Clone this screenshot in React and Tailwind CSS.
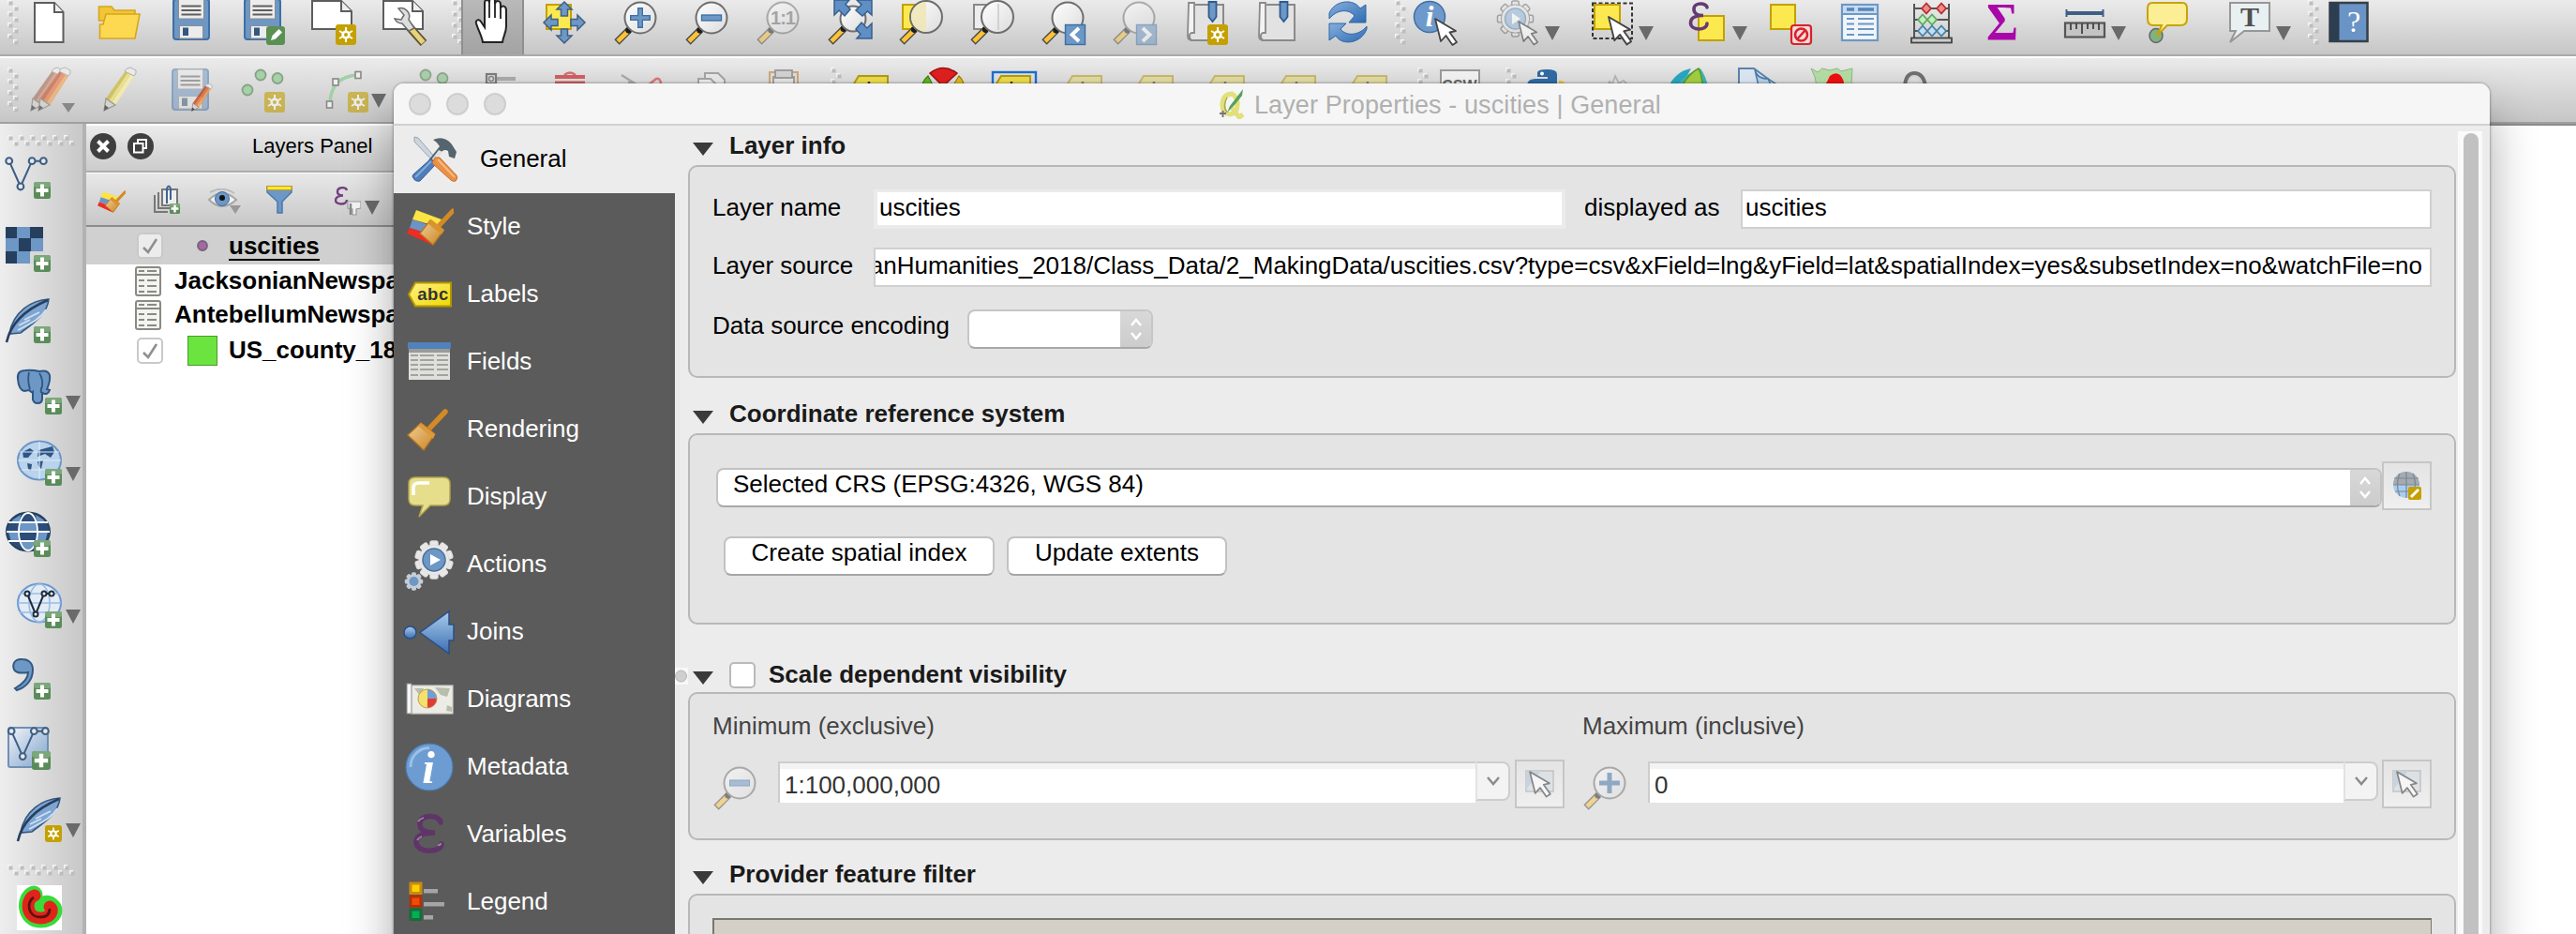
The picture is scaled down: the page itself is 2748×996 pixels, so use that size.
import React from "react";

/* ---------- shared drawing helpers ---------- */

const Icon = ({ children, className = "" }) => (
  <svg viewBox="0 0 48 48" className={`h-12 w-12 shrink-0 overflow-visible ${className}`} fill="none">
    {children}
  </svg>
);

const Defs = () => (
  <svg className="absolute h-0 w-0">
    <defs>
      <linearGradient id="lens" x1="0" y1="0" x2="1" y2="1">
        <stop offset="0" stopColor="#ffffff" />
        <stop offset="1" stopColor="#dcdcdc" />
      </linearGradient>
      <linearGradient id="blue" x1="0" y1="0" x2="0" y2="1">
        <stop offset="0" stopColor="#a9cdea" />
        <stop offset="1" stopColor="#3d6eb4" />
      </linearGradient>
      <linearGradient id="refresh" x1="0" y1="0" x2="1" y2="1">
        <stop offset="0" stopColor="#86afdc" />
        <stop offset="1" stopColor="#2f6cb3" />
      </linearGradient>
      <linearGradient id="tag" x1="0" y1="0" x2="1" y2="1">
        <stop offset="0" stopColor="#fff28a" />
        <stop offset="1" stopColor="#f0d800" />
      </linearGradient>
      <linearGradient id="vlayer" x1="0" y1="0" x2="1" y2="1">
        <stop offset="0" stopColor="#f1f4f8" />
        <stop offset="1" stopColor="#7fa2cb" />
      </linearGradient>
      <linearGradient id="wood" x1="0" y1="0" x2="1" y2="1">
        <stop offset="0" stopColor="#f3cf9a" />
        <stop offset="1" stopColor="#c88420" />
      </linearGradient>
    </defs>
  </svg>
);

const Dots = ({ x = 0, y = 0 }) => (
  <>
    <rect x={x} y={y} width="4" height="4" fill="#f6f6f6" />
    <rect x={x + 1.5} y={y + 1.5} width="4" height="4" fill="#bdbdbd" />
  </>
);

const HandleV = ({ className = "" }) => (
  <svg viewBox="0 0 12 50" className={`h-[50px] w-3 shrink-0 ${className}`}>
    {[0, 1, 2, 3].map((i) => (
      <g key={i}>
        <Dots x={0} y={i * 12} />
        <Dots x={6} y={i * 12 + 6} />
      </g>
    ))}
  </svg>
);

const HandleH = ({ className = "" }) => (
  <svg viewBox="0 0 72 12" className={`h-3 w-[72px] shrink-0 ${className}`}>
    {[0, 1, 2, 3, 4, 5].map((i) => (
      <g key={i}>
        <Dots x={i * 12} y={0} />
        <Dots x={i * 12 + 6} y={6} />
      </g>
    ))}
  </svg>
);

const Caret = ({ className = "" }) => (
  <svg viewBox="0 0 16 15" className={`h-[15px] w-4 shrink-0 ${className}`}>
    <path d="M0 0h16L8 15z" fill="#6a6a6a" />
  </svg>
);

const Star = ({ x = 26, y = 26, s = 22 }) => (
  <g transform={`translate(${x} ${y}) scale(${s / 22})`}>
    <rect width="22" height="22" rx="3" fill="#c4a000" />
    <path d="M11 3v16M4 7l14 8M18 7L4 15" stroke="#fff" strokeWidth="2" />
    <circle cx="11" cy="11" r="4.6" fill="#fff" />
    <circle cx="11" cy="11" r="2" fill="#c4a000" />
  </g>
);

const Plus = ({ x = 30, y = 30, s = 18 }) => (
  <g transform={`translate(${x} ${y}) scale(${s / 18})`}>
    <rect width="18" height="18" rx="2.5" fill="#5a8c5a" />
    <rect width="18" height="6" rx="2.5" fill="#7ba87b" />
    <path d="M9 2.5v13M2.5 9h13" stroke="#fff" strokeWidth="4" />
  </g>
);

const Cursor = ({ x, y, s = 1 }) => (
  <path
    transform={`translate(${x} ${y}) scale(${s})`}
    d="M0 0L22 13L15.500 14.500L23 25L18.500 28L11.500 18L6 24Z"
    fill="#fff"
    stroke="#444"
    strokeWidth="1.800"
    strokeLinejoin="round"
  />
);

const Lens = ({ cx = 29, cy = 19, r = 16.5, children }) => (
  <>
    <path d={`M${cx - r * 0.72} ${cy + r * 0.78}L4 45`} stroke="#4a4a4a" strokeWidth="7.500" />
    <path d={`M${cx - r * 0.85} ${cy + r * 0.92}L5 44`} stroke="#fcc336" strokeWidth="4.800" />
    <circle cx={cx - r * 0.75} cy={cy + r * 0.8} r="3.300" fill="#1d1d1d" />
    <circle cx={cx} cy={cy} r={r} fill="url(#lens)" stroke="#6e6e6e" strokeWidth="2" />
    {children}
  </>
);

const Floppy = () => (
  <>
    <rect x="5" y="-1" width="38" height="43" rx="3" fill="#6d97c4" stroke="#3f6fa5" strokeWidth="2" />
    <rect x="10.500" y="-1" width="27" height="21" fill="#ececec" stroke="#8d8d8d" strokeWidth="1" />
    <path d="M13.500 6.500h21M13.500 11h21M13.500 15.500h21" stroke="#5e5e5e" strokeWidth="1.800" />
    <rect x="11.500" y="27.500" width="25" height="13.500" fill="#ececec" stroke="#8d8d8d" strokeWidth="1" />
    <rect x="15" y="29.500" width="6" height="8.500" fill="#33587f" />
  </>
);

const Tag = ({ text = "abc", box, faded }) => (
  <g>
    {box && <rect x="1" y="5" width="46" height="40" fill="none" stroke="#1a6fd0" strokeWidth="2.400" />}
    <g opacity={faded ? 0.55 : 1}>
      <path d="M2 22L10 9H41V36H10z" fill={faded ? "#e6d96e" : "#ecdc4a"} stroke="#b39b10" strokeWidth="2" />
      <text x="9" y="26.500" fontFamily="Liberation Sans" fontWeight="700" fontSize="17" fill="#333">
        {text}
      </text>
    </g>
  </g>
);

const Feather = () => (
  <>
    <path d="M46 1C28 2 8 14 4 38L16 37C24 30 44 20 46 1Z" fill="#7ea5d2" stroke="#35577f" strokeWidth="1.600" />
    <path d="M13 34C24 28 36 24 43 12M14 29l12-6M20 23l16-8" stroke="#cfe0f2" strokeWidth="1.800" />
    <path d="M45 2C26 10 6 24 1 47" stroke="#26405f" strokeWidth="2.600" />
  </>
);

const Pencil = ({ body, dark, light }) => (
  <>
    <path d="M7 46L9 33L31 2L41 6L19 40z" fill={body} />
    <path d="M9 33L31 2L34 3.200L12.500 35z" fill={dark} />
    <path d="M16 37L38 4.600L41 6L19 40z" fill={light} />
    <path d="M7 46L9 33L19 40z" fill="#d9d4cc" stroke="#7b7b7b" strokeWidth="1.200" />
    <path d="M7 46l1-6 4 3z" fill="#333" />
    <path d="M29 4L31 1.500L35 0L41 3V6L39 9z" fill="#efefef" stroke="#999" strokeWidth="1" />
  </>
);

const Page = () => (
  <>
    <path d="M1 1H32L43 12V31H1z" fill="#fff" stroke="#5d5d5d" strokeWidth="2" />
    <path d="M32 1V12H43" fill="#eee" stroke="#5d5d5d" strokeWidth="2" />
  </>
);

const Vee = ({ c = "#3d5f86", w = 2.2, f = "#e8e8e8" }) => (
  <>
    <path d="M5 5L18 34L31 5H44" stroke={c} strokeWidth={w} />
    {[[5, 5], [31, 5], [44, 5], [18, 34]].map(([x, y]) => (
      <circle key={x} cx={x} cy={y} r="3.600" fill={f} stroke={c} strokeWidth={w} />
    ))}
  </>
);

/* ---------- main toolbar icons ---------- */

const NewFile = () => (
  <Icon>
    <path d="M9 3H30L39.500 13V45H9z" fill="#fff" stroke="#5d5d5d" strokeWidth="2" />
    <path d="M30 3V13H39.500" fill="#eee" stroke="#5d5d5d" strokeWidth="2" />
  </Icon>
);
const Folder = () => (
  <Icon>
    <path d="M1.500 7H15L18 11H40V22H1.500z" fill="#f0c637" stroke="#d8a51c" strokeWidth="1.600" />
    <path d="M9 15H45L40 41H2.500V26H6z" fill="#fdd951" stroke="#d8a51c" strokeWidth="1.600" />
  </Icon>
);
const SaveIcon = () => <Icon><Floppy /></Icon>;
const SaveAs = () => (
  <Icon>
    <Floppy />
    <rect x="28" y="28" width="20" height="20" rx="3" fill="#5a9153" />
    <path d="M33 43l1.500-5 7-7 3.500 3.500-7 7z" fill="#fff" />
  </Icon>
);
const NewComposer = () => <Icon><Page /><Star /></Icon>;
const Manager = () => (
  <Icon>
    <Page />
    <path d="M27 27L44 46" stroke="#5c5238" strokeWidth="9" />
    <path d="M30 30L43.500 45.500" stroke="#e8d27a" strokeWidth="5.500" />
    <path d="M17 9a9 9 0 0 1 11 12L34 30 28 33 21 25A9 9 0 0 1 13 20L20 21 23 16z" fill="#dedede" stroke="#6b6b6b" strokeWidth="1.500" />
  </Icon>
);
const Hand = () => (
  <Icon>
    <path
      d="M13 45C12 38 8 32 6 25C5 21 9 20 11 23L15 29V3C15 -1 20 -1 20 3V2C20 -3 26 -3 26 1V4C27 0 32 0 32 5V9C33 5 38 6 38 11V28C38 35 35 38 34 45z"
      fill="#fff"
      stroke="#222"
      strokeWidth="2"
    />
    <path d="M20 3V19M26 3V19M32 7V20" stroke="#222" strokeWidth="1.800" />
  </Icon>
);
const PanTo = () => (
  <Icon>
    <rect x="5" y="5" width="26" height="26" fill="#fce94f" stroke="#c4a000" strokeWidth="2" />
    {[0, 90, 180, 270].map((a) => (
      <path key={a} transform={`rotate(${a} 24 24)`} d="M24 2L32 10H27.500V17H20.500V10H16z" fill="#6d97c4" stroke="#3f5f86" strokeWidth="1.500" />
    ))}
  </Icon>
);
const ZoomIn = () => <Icon><Lens><path d="M29 8V30M18 19H40" stroke="#3b6ea5" strokeWidth="6" /><path d="M29 9.500V28.500M19.500 19H38.500" stroke="#6d97c4" strokeWidth="3.500" /></Lens></Icon>;
const ZoomOut = () => <Icon><Lens><rect x="18.500" y="16" width="21" height="6" fill="#6d97c4" stroke="#3b6ea5" strokeWidth="1.300" /></Lens></Icon>;
const ZoomNative = () => (
  <Icon className="opacity-50">
    <Lens><text x="29" y="26" textAnchor="middle" fontFamily="Liberation Sans" fontWeight="700" fontSize="20" letterSpacing="-1" fill="#6b6b6b">1:1</text></Lens>
  </Icon>
);
const ZoomFull = () => (
  <Icon>
    <Lens cx={28} cy={20} r={13.5} />
    {[[8, 0, 0], [48, 0, 90], [48, 41, 180]].map(([x, y, a]) => (
      <path key={a} transform={`translate(${x} ${y}) rotate(${a})`} d="M0 0H16L12 4.500L17 10L11 17L5 11L0 16z" fill="#5f8fc4" stroke="#375f8e" strokeWidth="1.500" />
    ))}
  </Icon>
);
const ZoomSel = () => (
  <Icon>
    <rect x="5" y="5" width="26" height="26" fill="#fce94f" stroke="#c4a000" strokeWidth="2" />
    <Lens cx={30} cy={18} r={17}><path d="M30 2A16 16 0 0 0 30 34z" fill="#f0e6b0" opacity=".8" /></Lens>
  </Icon>
);
const ZoomLayer = () => (
  <Icon>
    <rect x="5" y="5" width="26" height="26" fill="#ededed" stroke="#888" strokeWidth="2" />
    <Lens cx={30} cy={18} r={17}><path d="M31 4V32" stroke="#c9c9c9" strokeWidth="1.500" /></Lens>
  </Icon>
);
const ZoomStep = ({ next }) => (
  <Icon className={next ? "opacity-50" : ""}>
    <Lens cx={29} />
    <rect x="26.500" y="26.500" width="21" height="21" fill="#6d97c4" stroke="#3b6ea5" strokeWidth="1.400" />
    <path d={next ? "M33 30L40.500 37L33 44" : "M41 30L33.500 37L41 44"} stroke="#fff" strokeWidth="3.800" />
  </Icon>
);
const Book = () => (
  <>
    <path d="M13 5H43V43H8" fill="#e2e2e2" stroke="#8a8a8a" strokeWidth="2" />
    <path d="M6 3H12V35H9C6 36 6 42 10 43C6 43 5 41 5 38z" fill="#f3f3f3" stroke="#8a8a8a" strokeWidth="1.800" />
    <path d="M27.500 2H35.500V18L31.500 23L27.500 18z" fill="#6d97c4" stroke="#2d5c91" strokeWidth="1.800" />
  </>
);
const NewBookmark = () => <Icon><Book /><Star /></Icon>;
const Bookmark = () => <Icon><Book /></Icon>;
const Refresh = () => (
  <Icon>
    <path d="M4 14C10 0 30 -2 37 9L43 5V24H25L31 17C25 9 12 10 4 20z" fill="url(#refresh)" stroke="#2f66a8" strokeWidth="1" />
    <path d="M44 31C38 47 17 49 11 38L4 43V25H22L16 31C22 39 36 38 44 28z" fill="url(#refresh)" stroke="#2f66a8" strokeWidth="1" />
  </Icon>
);
const Identify = () => (
  <Icon>
    <circle cx="17" cy="18" r="16.500" fill="#6d9acb" stroke="#3f6fa5" strokeWidth="1.500" />
    <text x="17" y="28" textAnchor="middle" fontFamily="Liberation Serif" fontStyle="italic" fontWeight="700" fontSize="31" fill="#fff">i</text>
    <Cursor x={23} y={20} />
  </Icon>
);
const GearShape = ({ cx, cy, r, n = 10, fill, stroke }) => (
  <>
    {Array.from({ length: n }, (_, i) => (
      <rect key={i} x={cx - r * 0.2} y={cy - r} width={r * 0.4} height={r * 0.5} rx={r * 0.1} fill={fill} stroke={stroke} strokeWidth="1.500" transform={`rotate(${(i * 360) / n} ${cx} ${cy})`} />
    ))}
    <circle cx={cx} cy={cy} r={r * 0.8} fill={fill} stroke={stroke} strokeWidth="1" />
  </>
);
const ActionIcon = () => (
  <Icon className="opacity-60">
    <GearShape cx={20.5} cy={20} r={19} n={8} fill="#e6e6e6" stroke="#777" />
    <circle cx="20.500" cy="20" r="11" fill="#9dbbdc" stroke="#6d8fb5" strokeWidth="1.500" />
    <path d="M17 14L26 20L17 26z" fill="#fff" />
    <Cursor x={24} y={23} s={0.88} />
  </Icon>
);
const SelectIcon = () => (
  <Icon>
    <rect x="1" y="3.500" width="42" height="37.500" stroke="#333" strokeWidth="2" strokeDasharray="4 2.500" />
    <rect x="3" y="5" width="27" height="26" fill="#fce94f" stroke="#c4a000" strokeWidth="2" />
    <Cursor x={18} y={18} s={1.05} />
  </Icon>
);
const SelectExpr = () => (
  <Icon>
    <rect x="12" y="17" width="27" height="26" fill="#fce94f" stroke="#c4a000" strokeWidth="2" />
    <path d="M21 8C21 3 7 2 7 9.500C7 16 12 16.500 17 16.500C10 16.500 3.500 18 3.500 24.500C3.500 33 21 33 21 25" stroke="#663a73" strokeWidth="3.600" strokeLinecap="round" />
  </Icon>
);
const Deselect = () => (
  <Icon>
    <rect x="3" y="5" width="26" height="26" fill="#fce94f" stroke="#c4a000" strokeWidth="2" />
    <rect x="25" y="27" width="21" height="20" rx="3" fill="#f6dada" stroke="#d8222a" strokeWidth="2.200" />
    <circle cx="35.500" cy="37" r="6.500" stroke="#d8222a" strokeWidth="2.600" />
    <path d="M31 42L40 32" stroke="#d8222a" strokeWidth="2.600" />
  </Icon>
);
const TableIcon = () => (
  <Icon>
    <rect x="5" y="5" width="38" height="38" fill="#f1f5fa" stroke="#6d97c4" strokeWidth="2.200" />
    <rect x="6" y="6" width="36" height="8" fill="#c4daf0" />
    <path d="M5 15H43" stroke="#6d97c4" strokeWidth="2" />
    <path d="M10 10H18M22 10H39" stroke="#5585bb" strokeWidth="3.500" />
    <path d="M10 20H18M22 20H39M10 25.500H18M22 25.500H39M10 31H18M22 31H39M10 37H18M22 37H39" stroke="#6d97c4" strokeWidth="2" />
  </Icon>
);
const Abacus = () => (
  <Icon>
    <path d="M6 4V40M43 4V40M6 9H43M6 21H43M6 33H43" stroke="#555" strokeWidth="2" />
    <rect x="3" y="40.500" width="43" height="5" fill="#ccc" stroke="#444" strokeWidth="1.800" />
    {[[19, 9, "#f08a8a", "#b53030"], [35, 9, "#f08a8a", "#b53030"], [15, 21, "#bdf0bd", "#60a860"], [25, 21, "#bdf0bd", "#60a860"], [15, 33, "#bfe0f5", "#4a7fa5"], [25, 33, "#bfe0f5", "#4a7fa5"], [35, 33, "#bfe0f5", "#4a7fa5"]].map(([x, y, f, s], i) => (
      <path key={i} d={`M${x - 5} ${y}L${x} ${y - 5.5}L${x + 5} ${y}L${x} ${y + 5.5}z`} fill={f} stroke={s} strokeWidth="1.800" />
    ))}
  </Icon>
);
const Sigma = () => (
  <Icon>
    <text x="24" y="43" textAnchor="middle" fontFamily="Liberation Serif" fontWeight="700" fontSize="58" fill="#a908a9" textLength="34" lengthAdjust="spacingAndGlyphs">Σ</text>
  </Icon>
);
const Measure = () => (
  <Icon>
    <path d="M5 14H43" stroke="#3d5f86" strokeWidth="4" />
    <path d="M4.500 10V18M43.500 10V18" stroke="#3d5f86" strokeWidth="2" />
    <rect x="3" y="24.500" width="42" height="15" fill="#c4c4c4" stroke="#555" strokeWidth="2.200" />
    <path d="M9 25V32M15 25V31M21 25V36M27 25V31M33 25V31M39 25V32" stroke="#444" strokeWidth="1.800" />
  </Icon>
);
const MapTips = () => (
  <Icon>
    <ellipse cx="12" cy="38" rx="7" ry="7.500" fill="#7fb27f" stroke="#666" strokeWidth="1.500" />
    <path d="M8 3H40Q45 3 45 9V20Q45 27 38 27H24L13 38L18 27H9Q3 27 3 20V9Q3 3 8 3z" fill="#fcee94" stroke="#c9a20a" strokeWidth="2" />
  </Icon>
);
const Annotation = () => (
  <Icon>
    <path d="M3 3H45V33H18L3 45L9 33H3z" fill="#e9f0f2" stroke="#979797" strokeWidth="2" />
    <text x="24" y="28" textAnchor="middle" fontFamily="Liberation Serif" fontWeight="700" fontSize="30" fill="#505050">T</text>
  </Icon>
);
const Help = () => (
  <Icon>
    <rect x="3.500" y="3" width="40" height="41" fill="#6a94c6" stroke="#363f4a" strokeWidth="2.500" />
    <rect x="3.500" y="3" width="10" height="41" fill="#2c3e50" />
    <text x="29" y="34" textAnchor="middle" fontFamily="Liberation Serif" fontSize="32" fill="#fff">?</text>
  </Icon>
);

/* ---------- digitizing toolbar icons ---------- */

const EditsIcon = () => (
  <Icon>
    <g opacity=".6">
      <g transform="translate(-2 0)"><Pencil body="#c98a70" dark="#a86a52" light="#dba58f" /></g>
      <g transform="translate(6 0)"><Pencil body="#e8703a" dark="#c04a20" light="#f3a24c" /></g>
    </g>
    <path d="M38 38H52L45 48z" fill="#888" />
  </Icon>
);
const PencilIcon = () => <Icon className="opacity-70"><Pencil body="#f0e070" dark="#c9b93a" light="#faf2a8" /></Icon>;
const SaveEdits = () => (
  <Icon>
    <g opacity=".5" transform="translate(-1 3)"><Floppy /></g>
    <g opacity=".8" transform="translate(20 17) scale(.64)"><Pencil body="#e8703a" dark="#c04a20" light="#f3a24c" /></g>
  </Icon>
);
const Pts = () => (
  <>
    {[[22, 8], [40, 11.500], [8, 24]].map(([x, y]) => (
      <circle key={x} cx={x} cy={y} r="5.500" fill="#a6d0a6" stroke="#86a286" strokeWidth="1.800" />
    ))}
  </>
);
const AddPoint = () => <Icon><Pts /><g opacity=".6"><Star /></g></Icon>;
const AddCurve = () => (
  <Icon>
    <path d="M8 40C8 20 18 9 38 8" stroke="#a3cfa6" strokeWidth="3.500" />
    {[[7.500, 39.500], [14, 15.500], [38, 8]].map(([x, y]) => (
      <rect key={x} x={x - 3} y={y - 3.500} width="6" height="7" fill="#eee" stroke="#888" strokeWidth="1.600" />
    ))}
    <g opacity=".6"><Star x={27} /></g>
  </Icon>
);
const MovePoint = () => <Icon className="opacity-90"><Pts /></Icon>;
const NodeTool = () => (
  <Icon>
    <path d="M20 12H42" stroke="#aaa" strokeWidth="4" />
    <rect x="11" y="7" width="10" height="10" fill="#ddd" stroke="#7d7d7d" strokeWidth="2.200" />
    <circle cx="16" cy="12" r="2.500" stroke="#888" strokeWidth="1.500" />
  </Icon>
);
const Trash = () => (
  <Icon>
    <path d="M18 8Q24 3 30 8" stroke="#cf7070" strokeWidth="2.400" />
    <path d="M8 10H40M8 16.500H40" stroke="#d26060" strokeWidth="4" />
  </Icon>
);
const Cut = () => (
  <Icon>
    <path d="M3 8L22 20M10 16L22 19" stroke="#aaa" strokeWidth="2.500" />
    <path d="M30 20L40 12Q45 11 45 18" stroke="#d77" strokeWidth="2.500" />
  </Icon>
);
const Copy = () => (
  <Icon>
    <path d="M16 6H30L37 13V40H16z" fill="#e9e9e9" stroke="#a5a5a5" strokeWidth="2" />
    <path d="M9 12H22L28 18V40H9z" fill="#ededed" stroke="#a5a5a5" strokeWidth="2" />
  </Icon>
);
const Paste = () => (
  <Icon>
    <rect x="9" y="5" width="30" height="36" fill="#e4ddd0" stroke="#c9ab7c" strokeWidth="2" />
    <rect x="13" y="10" width="22" height="28" fill="#e6e6e6" stroke="#999" strokeWidth="1.800" />
    <rect x="15" y="3" width="18" height="8" fill="#d4d4d4" stroke="#999" strokeWidth="1.800" />
  </Icon>
);
const Pie = () => (
  <Icon>
    <path d="M24 20L10 6Q24 -5 39 6z" fill="#e02020" stroke="#a01010" strokeWidth="1.500" />
    <path d="M16 24L8 9Q0 16 2 24z" fill="#5cb81f" stroke="#3f7f14" strokeWidth="1.200" />
    <path d="M32 24L41 9Q48 16 46 24z" fill="#e0bb1a" stroke="#9c8110" strokeWidth="1.200" />
  </Icon>
);
const Csw = () => (
  <Icon>
    <rect x="5" y="3" width="41" height="38" fill="#f3f3f3" stroke="#9b9b9b" strokeWidth="2" />
    <text x="25" y="25" textAnchor="middle" fontFamily="Liberation Sans" fontWeight="700" fontSize="16" fill="#666">CSW</text>
  </Icon>
);
const Python = () => (
  <Icon>
    <path d="M3 18Q4 12 12 12H25V10H14V5Q15 2 24 2Q35 2 35 7V24H3z" fill="#2f6ba5" />
    <circle cx="19" cy="6.500" r="2" fill="#fff" />
    <path d="M37 14Q44 13 45 22H37z" fill="#f0c23a" />
  </Icon>
);
const Sketch = () => (
  <Icon>
    <path d="M12 20L15 15L18 18L21 9L25 17L30 14L34 18z" fill="#e4e4e4" stroke="#b5b5b5" strokeWidth="1.800" />
  </Icon>
);
const Leaf = () => (
  <Icon>
    <path d="M2 20Q10 4 26 1L20 12L14 20z" fill="#2aa7bd" />
    <path d="M10 20Q20 6 36 1Q42 10 44 20z" fill="#3fb3b5" />
    <path d="M16 20Q24 6 34 1Q38 10 38 20z" fill="#a3cf42" stroke="#5c9a2a" strokeWidth="1.500" />
  </Icon>
);
const MapDoc = () => (
  <Icon>
    <path d="M1 1H17L32 12L44 20H1z" fill="#dbe7f2" stroke="#5d84aa" strokeWidth="2" />
    <path d="M18 2Q20 12 32 12L36 20H22z" fill="#b8d0e6" stroke="#4a7bab" strokeWidth="1.500" />
  </Icon>
);
const RedMap = () => (
  <Icon>
    <path d="M2 1L9 5L14 1L22 3L30 1L34 4L46 1L45 20H8L6 10z" fill="#b6dda6" stroke="#8fbb7e" strokeWidth="1" />
    <path d="M16 20Q20 14 22 9Q28 4 33 8Q38 14 37 20z" fill="#f01010" />
  </Icon>
);
const Ring = () => (
  <Icon>
    <path d="M26 20Q27 6 36 6Q46 6 48 20" stroke="#707070" strokeWidth="4" />
    <path d="M30 18Q31 9 36 9Q41 9 43 18" stroke="#d5d5d5" strokeWidth="1.500" />
  </Icon>
);

const TopToolbar = () => (
  <div className="flex h-[62px] shrink-0 items-start border-b-2 border-white">
    <div className="flex h-[60px] w-full items-start border-b-2 border-[#a9a9a9] bg-linear-to-b from-[#ebebeb] to-[#c6c6c6]">
      <HandleV className="ml-2" />
      <div className="ml-2 flex gap-7">
        <NewFile /><Folder /><SaveIcon /><SaveAs /><NewComposer /><Manager />
      </div>
      <HandleV className="-mr-0.5 ml-[26px]" />
      <div className="h-[58px] w-[67px] border-x-2 border-[#8f8f8f] bg-linear-to-b from-[#b9b9b9] to-[#a3a3a3] pl-2">
        <Hand />
      </div>
      <div className="ml-[19px] flex gap-7">
        <PanTo /><ZoomIn /><ZoomOut /><ZoomNative /><ZoomFull /><ZoomSel /><ZoomLayer /><ZoomStep /><ZoomStep next /><NewBookmark /><Bookmark /><Refresh />
      </div>
      <HandleV className="ml-[26px]" />
      <div className="ml-2"><Identify /></div>
      <div className="ml-10 flex gap-1"><ActionIcon /><Caret className="mt-7" /></div>
      <div className="ml-[34px] flex gap-0.5"><SelectIcon /><Caret className="mt-7" /></div>
      <div className="ml-9 flex"><SelectExpr /><Caret className="mt-7" /></div>
      <div className="ml-[22px] flex"><Deselect /></div>
      <div className="ml-[26px] flex gap-7"><TableIcon /><Abacus /><Sigma /></div>
      <div className="ml-10 flex gap-1"><Measure /><Caret className="mt-7" /></div>
      <div className="ml-5"><MapTips /></div>
      <div className="ml-10 flex gap-1"><Annotation /><Caret className="mt-7" /></div>
      <HandleV className="ml-[18px]" />
      <div className="ml-2"><Help /></div>
    </div>
  </div>
);

const EditToolbar = () => (
  <div className="flex h-[70px] shrink-0 items-start border-b-2 border-[#a0a0a0] bg-linear-to-b from-[#ebebeb] to-[#c6c6c6] pt-2.5">
    <HandleV className="ml-2" />
    <div className="ml-2 flex gap-7"><EditsIcon /><PencilIcon /><SaveEdits /><AddPoint /></div>
    <div className="ml-10 flex gap-1"><AddCurve /><Caret className="mt-7" /></div>
    <div className="ml-5 flex gap-7"><MovePoint /><NodeTool /><Trash /><Cut /><Copy /><Paste /></div>
    <HandleV className="ml-[26px]" />
    <div className="ml-2 flex gap-7">
      <Icon><Tag /></Icon><Pie /><Icon><Tag text="ab◂" box /></Icon>
      <Icon><Tag text="ab◂" faded /></Icon><Icon><Tag faded /></Icon><Icon><Tag faded /></Icon><Icon><Tag faded /></Icon><Icon><Tag faded /></Icon>
    </div>
    <HandleV className="ml-[26px]" />
    <div className="ml-2"><Csw /></div>
    <HandleV className="ml-[26px]" />
    <div className="ml-2 flex gap-7"><Python /><Sketch /><Leaf /><MapDoc /><RedMap /><Ring /></div>
  </div>
);

/* ---------- left toolbar ---------- */

const SideTool = ({ children, caret, className = "" }) => (
  <div className={`flex h-[76px] items-start ${caret ? "pl-[18px]" : "pl-1.5"} ${className}`}>
    <Icon>{children}</Icon>
    {caret && <Caret className="ml-1 mt-7" />}
  </div>
);

const LeftToolbar = () => (
  <div className="flex w-[92px] shrink-0 flex-col border-r-4 border-[#b2b2b2] bg-linear-to-r from-[#eeeeee] to-[#c8c8c8] pt-3">
    <HandleH className="ml-2" />
    <div className="mt-2.5">
      <SideTool><g transform="translate(-1 1) scale(.94)"><Vee /></g><Plus y={28} /></SideTool>
      <SideTool>
        <rect width="40" height="39" fill="#6d97c4" />
        <path d="M0 0h12v12H0zM26 0h14v12H26zM14 12h13v14H14zM0 26h12v13H0z" fill="#263f5e" />
        <path d="M26 26H42V40H26z" fill="#d8d8d8" />
        <Plus />
      </SideTool>
      <SideTool><Feather /><Plus /></SideTool>
      <SideTool caret>
        <path d="M9 1Q0 1 1 10Q2 22 8 23L13 22Q16 25 17 24V32Q18 36 22 36Q27 36 27 31V25Q33 28 35 22L32 21Q36 12 35 6Q33 0 24 2Q16 0 9 1z" fill="#6d97c4" stroke="#2f5583" strokeWidth="2" />
        <path d="M13 3Q11 12 14 21M24 4Q28 10 27 18Q25 22 26 25" stroke="#2f5583" strokeWidth="1.800" />
        <Plus />
      </SideTool>
      <SideTool caret>
        <ellipse cx="24" cy="21" rx="23" ry="20.500" fill="#b9d3ec" stroke="#6a95c7" strokeWidth="2" />
        <path d="M6 12L14 8L18 11L12 18L7 18zM11 24L16 25L15 32L12 30zM23 10L38 6L40 12L36 18L30 14L22 17zM22 22L28 21L26 30L23 27z" fill="#2f5583" />
        <path d="M3 12H45M1 21H47M5 31H43M24 1V41" stroke="#dcebf8" strokeWidth="1.200" />
        <Plus />
      </SideTool>
      <SideTool>
        <ellipse cx="24" cy="21" rx="23" ry="20.500" fill="#2b4d77" stroke="#26405f" strokeWidth="2" />
        <path d="M15 12H33V21H15zM3 21H15V32H6zM33 21H45L42 32H33zM8 8L16 3L15 11H6zM32 3L40 8L42 11H33zM15 32H33L28 40H20z" fill="#6d97c4" />
        <path d="M3 11H45M1 21H47M3 31H45" stroke="#fff" strokeWidth="2" />
        <ellipse cx="24" cy="21" rx="10" ry="20" stroke="#fff" strokeWidth="1.800" />
        <Plus />
      </SideTool>
      <SideTool caret>
        <ellipse cx="24" cy="21" rx="23" ry="20.500" fill="#e3ebf5" stroke="#6a99d6" strokeWidth="2" />
        <path d="M3 11H45M1 21H47M3 31H45" stroke="#9cbce4" strokeWidth="1.600" />
        <ellipse cx="24" cy="21" rx="11" ry="20" stroke="#9cbce4" strokeWidth="1.600" />
        <path d="M11 11L20 33L29 11H38" stroke="#1e2c3c" strokeWidth="2" />
        {[[11, 11], [29, 11], [37, 11], [20, 33]].map(([x, y]) => <circle key={x} cx={x} cy={y} r="2.500" fill="#fff" stroke="#1e2c3c" strokeWidth="2" />)}
        <Plus />
      </SideTool>
      <SideTool>
        <path d="M18 5C9 4 7 11 9 16C11 20 18 20 24 19C24 26 19 31 10 36L12 38C22 35 29 27 29 16C29 9 24 5 18 5z" fill="#6d97c4" stroke="#33587f" strokeWidth="2" />
        <Plus />
      </SideTool>
      <SideTool>
        <rect x="3" y="2" width="42" height="42" rx="2" fill="url(#vlayer)" stroke="#7090b5" strokeWidth="2" />
        <g transform="translate(1.500 1) scale(.93)"><Vee /></g>
        <Plus x={28} y={27} s={20} />
      </SideTool>
      <SideTool caret><Feather /><Star x={30} y={30} s={18} /></SideTool>
    </div>
    <HandleH className="-mt-1 ml-2" />
    <div className="mt-2.5 pl-[18px]">
      <Icon>
        <rect width="48" height="48" fill="#fff" />
        <path d="M18 10C8 14 9 36 25 36C37 36 42 27 37 23C33 19 28 20 25 23" stroke="#38dc38" strokeWidth="19" strokeLinecap="round" />
        <path d="M19 11C9 14 9 35 25 35C37 35 40 26 35 23" stroke="#e0241c" strokeWidth="13" strokeLinecap="round" />
        <path d="M23 24L29 14" stroke="#38dc38" strokeWidth="3" />
        <path d="M18 13C10 17 11 34 25 34C33 34 35 30 35 25" stroke="#5b1210" strokeWidth="2.800" />
      </Icon>
    </div>
  </div>
);

/* ---------- layers panel ---------- */

const Check = ({ className = "" }) => (
  <span className={`flex h-7 w-7 items-center justify-center rounded-[5px] border-2 border-[#c9c9c9] ${className}`}>
    <svg viewBox="0 0 20 20" className="h-5 w-5" fill="none"><path d="M3 12L8 17L17 3" stroke="#8f8f8f" strokeWidth="2.600" /></svg>
  </span>
);
const SheetIcon = () => (
  <svg viewBox="0 0 28 32" className="h-8 w-7" fill="none">
    <rect x="1" y="1" width="26" height="30" rx="2" fill="#f3f3f0" stroke="#8a8a84" strokeWidth="2" />
    <path d="M1 9H27M4 5H10M13 5H23M4 15H10M13 15H23M4 21H10M13 21H23M4 27H10M13 27H23" stroke="#8a8a84" strokeWidth="1.800" />
  </svg>
);
const BrushPalette = ({ className }) => (
  <svg viewBox="0 0 50 40" className={className} fill="none">
    <path d="M10 2L37 12L34 20L6 12z" fill="#fbe443" />
    <path d="M6 12L32 21L29 29L3 21z" fill="#6c94c4" />
    <path d="M3 21L30 30L27 39L0 27z" fill="#ee2c23" />
    <path d="M49 3L34 19" stroke="#d38a24" strokeWidth="5" strokeLinecap="round" />
    <path d="M25 13L39 24L28 39L14 27z" fill="url(#wood)" stroke="#b9761b" strokeWidth="1.300" />
    <path d="M26 12L40 23L37 28L22 16z" fill="#d8932f" />
  </svg>
);

const LayersPanel = () => (
  <div className="flex grow flex-col bg-white text-[26px] text-black">
    <div className="flex h-[52px] shrink-0 items-center border-b-2 border-t-2 border-[#adadad] border-t-white bg-linear-to-b from-[#ebebeb] to-[#cccccc] pb-1 pl-1">
      <svg viewBox="0 0 28 28" className="h-7 w-7" fill="none">
        <circle cx="14" cy="14" r="14" fill="#3f3f3f" />
        <path d="M8.500 8.500L19.500 19.500M19.500 8.500L8.500 19.500" stroke="#fff" strokeWidth="4" />
      </svg>
      <svg viewBox="0 0 28 28" className="ml-3 h-7 w-7" fill="none">
        <circle cx="14" cy="14" r="14" fill="#3f3f3f" />
        <path d="M11 11V7H20V16H16" stroke="#fff" strokeWidth="2" />
        <rect x="7" y="11" width="9.500" height="9.500" stroke="#fff" strokeWidth="2" />
      </svg>
      <span className="ml-[105px] text-[22px] leading-7">Layers Panel</span>
    </div>
    <div className="flex h-[58px] shrink-0 items-start border-b-2 border-[#8c8c8c] border-t border-t-white bg-linear-to-b from-[#e8e8e8] to-[#c8c8c8] pl-3 pt-3">
      <BrushPalette className="mt-1.5 h-6 w-[30px]" />
      <svg viewBox="0 0 28 32" className="ml-[30px] h-8 w-7" fill="none">
        <path d="M1 11V29H15M5 8V25H19" stroke="#777" strokeWidth="2" />
        <rect x="9" y="5" width="16" height="17" fill="#eee" stroke="#777" strokeWidth="2" />
        <path d="M14 20V4Q16 -1 18 4V16" stroke="#3d6494" strokeWidth="2" />
        <Plus x={17} y={20} s={11} />
      </svg>
      <svg viewBox="0 0 36 30" className="ml-[30px] mt-1 h-[30px] w-9" fill="none">
        <path d="M1 12Q15 -2 30 12Q15 26 1 12z" fill="#f2f2f2" stroke="#a5a5a5" strokeWidth="2" />
        <path d="M2 4Q15 -3 28 5" stroke="#bbb" strokeWidth="2" />
        <circle cx="15" cy="11" r="7.500" fill="#6d97c4" stroke="#3f6fa5" strokeWidth="1" />
        <circle cx="15" cy="10" r="3" fill="#111" />
        <path d="M23 18H35L29 27z" fill="#999" />
      </svg>
      <svg viewBox="0 0 28 32" className="ml-[26px] h-8 w-7" fill="none">
        <path d="M1 2H27V8L17 18V30H12V18L1 8z" fill="#6d97c4" stroke="#4a78ab" strokeWidth="1.500" />
        <rect x="1" y="1.500" width="26" height="4" fill="#fbe443" stroke="#c4a000" strokeWidth="1" />
      </svg>
      <svg viewBox="0 0 28 32" className="ml-[45px] mt-0.5 h-8 w-7" fill="none">
        <path d="M13 4C12 0 3 0 3 5.500C3 9.500 7 9.500 9 9.500C5 9.500 1 11 1 14.500C1 20 13 20 13 14" stroke="#74407f" strokeWidth="2.400" />
        <path d="M14 16H28V23L23 24V30H19V24L14 23z" fill="#f4f4f4" stroke="#999" strokeWidth="1.200" />
        <path d="M17 18V30" stroke="#888" strokeWidth="2.500" />
      </svg>
      <Caret className="ml-1 mt-[17px]" />
    </div>
    <div className="flex h-10 shrink-0 items-center bg-[#d0d0d0] pl-[54px] font-bold">
      <Check className="bg-[#ececec]" />
      <svg viewBox="0 0 12 12" className="ml-9 h-3 w-3"><circle cx="6" cy="6" r="5" fill="#a8679d" stroke="#6f6480" strokeWidth="1.800" /></svg>
      <span className="ml-[22px] mt-[3px] flex h-7 items-end border-b-2 border-black leading-[27px]">uscities</span>
    </div>
    <div className="flex h-9 shrink-0 items-center pl-[52px] font-bold leading-none"><SheetIcon /><span className="ml-3.5 whitespace-nowrap pb-0.5">JacksonianNewspa</span></div>
    <div className="flex h-9 shrink-0 items-center pl-[52px] font-bold leading-none"><SheetIcon /><span className="ml-3.5 whitespace-nowrap pb-0.5">AntebellumNewspa</span></div>
    <div className="flex h-10 shrink-0 items-center pl-[54px] font-bold leading-none">
      <Check className="bg-white" />
      <span className="ml-[26px] h-8 w-8 border border-[#4a9c28] bg-[#6be43f]" />
      <span className="ml-3 whitespace-nowrap pb-0.5">US_county_18</span>
    </div>
  </div>
);

/* ---------- dialog ---------- */

const menu = [
  ["Style", <BrushPalette key="i" className="ml-0 h-10 w-[50px]" />],
  ["Labels", (
    <Icon key="i">
      <path d="M2 24L9 11.500H47V36.500H9z" fill="url(#tag)" stroke="#b39500" strokeWidth="2" />
      <text x="28" y="30" textAnchor="middle" fontFamily="Liberation Sans" fontWeight="700" fontSize="18.500" letterSpacing="0.500" fill="#333">abc</text>
    </Icon>
  )],
  ["Fields", (
    <Icon key="i">
      <rect x="2" y="5" width="44" height="38" fill="#dfe0dc" />
      <rect x="1" y="3" width="46" height="7" fill="#4f81bd" />
      <rect x="2" y="10" width="44" height="4" fill="#9a9a96" />
      <path d="M4 17H12M14 17H29M32 17H44M4 22H12M14 22H29M32 22H44M4 27H12M14 27H29M32 27H44M4 32H12M14 32H29M32 32H44M4 38H12M14 38H29M32 38H44" stroke="#a3a39e" strokeWidth="2" />
    </Icon>
  )],
  ["Rendering", (
    <Icon key="i">
      <path d="M41 5L24 23" stroke="#d38a24" strokeWidth="5.500" strokeLinecap="round" />
      <path d="M15 17L30 29L18 46L1 30z" fill="url(#wood)" stroke="#b9761b" strokeWidth="1.300" />
      <path d="M15 17L30 29L28 34L12 20z" fill="#dc9a3a" />
    </Icon>
  )],
  ["Display", (
    <Icon key="i">
      <path d="M9 3H39Q46 3 46 10V26Q46 33 39 33H25L13 45L17 33H9Q2 33 2 26V10Q2 3 9 3z" fill="#e7de8c" stroke="#b3a44a" strokeWidth="1.500" />
      <path d="M7 22V14Q7 9 13 9H24" stroke="#fff" strokeWidth="3.500" />
    </Icon>
  )],
  ["Actions", (
    <Icon key="i">
      <GearShape cx={29} cy={19} r={20} fill="#e9e9e9" stroke="#e0e0e0" />
      <circle cx="29" cy="19" r="12" fill="#6d97c4" stroke="#4b6f9a" strokeWidth="1.500" />
      <path d="M25 13L36 19L25 25z" fill="#fff" />
      <GearShape cx={7.5} cy={42} r={9} n={8} fill="#c5cdd6" stroke="#c5cdd6" />
      <circle cx="7.500" cy="42" r="5" fill="#6d97c4" />
    </Icon>
  )],
  ["Joins", (
    <Icon key="i">
      <circle cx="3.500" cy="24.500" r="6.500" fill="url(#blue)" stroke="#2b4f85" strokeWidth="1.500" />
      <path d="M14 24.500L45 2V16H50V33H45V47z" fill="url(#blue)" stroke="#2b4f85" strokeWidth="1.500" />
    </Icon>
  )],
  ["Diagrams", (
    <Icon key="i">
      <rect x="4" y="9" width="45" height="30" fill="#ecebe6" stroke="#c8c8c2" strokeWidth="1.200" />
      <rect x="0" y="7" width="5" height="32" fill="#f7f7f7" stroke="#888" strokeWidth="1" />
      <path d="M8 12L18 12L14 20zM30 11L46 12L43 21L36 19zM43 30L48 32V37L42 36z" fill="#b7beac" />
      <path d="M22 13A10 10 0 0 0 22 33z" fill="#f4e06a" />
      <path d="M22 23V13A10 10 0 0 1 32 23z" fill="#6f9fd4" />
      <path d="M22 23H32A10 10 0 0 1 22 33z" fill="#e23b32" />
      <circle cx="22" cy="23" r="10" stroke="#b5903a" strokeWidth=".8" />
    </Icon>
  )],
  ["Metadata", (
    <Icon key="i">
      <circle cx="24" cy="24" r="25" fill="#6c9cd2" stroke="#4a7ab2" strokeWidth="1.200" />
      <path d="M4 24A20 20 0 0 1 24 3.500" stroke="#9cc0e6" strokeWidth="3" />
      <text x="23" y="41" textAnchor="middle" fontFamily="Liberation Serif" fontStyle="italic" fontWeight="700" fontSize="49" fill="#fff">i</text>
    </Icon>
  )],
  ["Variables", (
    <Icon key="i">
      <path d="M36 11C35 2 13 2 14 13C14 20 21 22 30 22C19 22 10 24 10 32C10 44 37 44 37 34" stroke="#5f3568" strokeWidth="5.500" strokeLinecap="round" />
      <path d="M12 10Q14 7 18 6M11 30Q13 27 16 26M33 35Q36 36 36 33" stroke="#a585ad" strokeWidth="1.800" />
    </Icon>
  )],
  ["Legend", (
    <Icon key="i">
      {[["#fdd000", "#c98a10", 4, 15], ["#f74a00", "#a83410", 18, 22], ["#00b050", "#1a6b3c", 32, 10]].map(([f, s, y, w]) => (
        <g key={y}>
          <rect x="4" y={y} width="11" height="10.500" fill={f} stroke={s} strokeWidth="3" />
          <rect x="18" y={y + 6} width={w} height="4.500" fill="#a5a5a5" />
        </g>
      ))}
    </Icon>
  )],
];

const Sidebar = () => (
  <div className="flex w-[300px] shrink-0 flex-col bg-[#5b5b5b] text-white">
    <div className="flex h-[72px] shrink-0 items-center gap-6 bg-[#ececec] pl-5 text-black">
      <Icon>
        <path d="M2 0L6 1L26 24L23 27L2 5z" fill="#cdd5de" stroke="#9aa5b1" strokeWidth="1" />
        <path d="M22 3Q34 -2 42 8L47 16L45 23L39 21L38 15Q35 13 32 15L20 28L17 25L29 10Q27 6 22 3z" fill="#56646e" />
        <path d="M28 14L19 26L23 29L32 16z" fill="#dfe2e5" />
        <path d="M20 23L25 29L8 47Q3 48 1 44Q-1 42 1 40z" fill="#4d7dbb" stroke="#345f99" strokeWidth="1" />
        <path d="M20 26L3 43" stroke="#86abd9" strokeWidth="2" />
        <path d="M24 22L29 22L47 41Q49 44 46 47Q43 48 41 46L21 28z" fill="#ea8f45" stroke="#c9702a" strokeWidth="1" />
        <path d="M27 24L45 43" stroke="#f8bb80" strokeWidth="2" />
      </Icon>
      <span className="pb-0.5">General</span>
    </div>
    {menu.map(([label, icon]) => (
      <div key={label} className="flex h-[72px] shrink-0 items-center pl-3.5">
        <div className="flex w-16 items-center">{icon}</div>
        <span className="pb-0.5">{label}</span>
      </div>
    ))}
  </div>
);

const Header = ({ children, check, className = "" }) => (
  <div className={`flex shrink-0 items-center pl-[5px] font-bold text-[#1a1a1a] ${className}`}>
    <svg viewBox="0 0 22 14" className="mt-2 h-3.5 w-[22px]"><path d="M0 0H22L11 14z" fill="#3a3a3a" /></svg>
    {check && <span className="ml-[17px] mt-0.5 h-7 w-7 rounded-[5px] border-2 border-[#b9b9b9] bg-white" />}
    <span className={check ? "ml-3.5" : "ml-[17px]"}>{children}</span>
  </div>
);

const Box = ({ children, className = "" }) => (
  <div className={`shrink-0 rounded-[10px] border-2 border-[#b8b8b8] bg-[#e4e4e4] pl-6 pr-[24px] ${className}`}>{children}</div>
);

const Stepper = ({ className = "" }) => (
  <div className={`flex shrink-0 items-center justify-center bg-linear-to-b from-[#d8d8d8] to-[#cccccc] ${className}`}>
    <svg viewBox="0 0 14 24" className="h-6 w-3.5" fill="none"><path d="M2 8L7 2L12 8M2 16L7 22L12 16" stroke="#fff" strokeWidth="2.500" /></svg>
  </div>
);

const PushButton = ({ children, className }) => (
  <button className={`flex h-[42px] items-center justify-center rounded-lg border-2 border-b-[#a5a5a5] border-[#c2c2c2] bg-white pb-2 ${className}`}>{children}</button>
);

const SquareButton = ({ children }) => (
  <div className="flex h-[52px] w-[53px] shrink-0 items-center justify-center border-2 border-[#c6c6c6] bg-linear-to-b from-[#e4e4e4] to-[#efefef]">{children}</div>
);

const CanvasScale = () => (
  <SquareButton>
    <svg viewBox="0 0 34 32" className="h-8 w-[34px] opacity-60" fill="none">
      <rect x="2" y="2" width="29" height="22" fill="#d5dde4" stroke="#aaa" strokeWidth="1.500" />
      <path d="M2 2H18L2 22z" fill="#b3c6d8" />
      <Cursor x={6} y={3} s={0.95} />
    </svg>
  </SquareButton>
);

const ScaleCombo = ({ value, className }) => (
  <div className={`flex h-[46px] shrink-0 items-start ${className}`}>
    <div className="h-[44px] min-w-0 grow border-l-2 border-t-2 border-[#cdcdcd] bg-white">
      <div className="h-1.5 bg-[#f3f3f3]" />
      <div className="flex h-9 items-center bg-white pb-0.5 pl-[5px] text-[#333]">{value}</div>
    </div>
    <div className="flex h-[42px] w-[37px] shrink-0 items-center justify-center rounded-r-lg border-2 border-[#cdcdcd] border-l-[#e2e2e2] bg-[#f3f3f3]">
      <svg viewBox="0 0 16 10" className="h-2.5 w-4" fill="none"><path d="M2 1L8 8L14 1" stroke="#8c8c8c" strokeWidth="2.500" /></svg>
    </div>
  </div>
);

const General = () => (
  <div className="flex min-w-0 grow flex-col pl-3.5">
    <Header className="h-[42px]">Layer info</Header>
    <Box className="h-[227px] pt-6">
      <div className="flex h-[42px] items-center">
        <span className="w-[172px] pb-1">Layer name</span>
        <div className="h-[42px] w-[738px] shrink-0 border-4 border-t-[3px] border-[#ebebeb] bg-white pl-0.5"><span className="block leading-[32px]">uscities</span></div>
        <span className="ml-5 w-[167px] shrink-0 pb-1">displayed as</span>
        <div className="h-[42px] grow border-2 border-[#d0d0d0] bg-white pl-[3px] leading-[34px]">uscities</div>
      </div>
      <div className="mt-5 flex h-[42px] items-center">
        <span className="w-[172px] shrink-0 pb-1">Layer source</span>
        <div className="flex h-[42px] min-w-0 grow justify-end overflow-hidden border-2 border-[#d0d0d0] bg-white pr-2 leading-[34px]">
          <span className="whitespace-nowrap">anHumanities_2018/Class_Data/2_MakingData/uscities.csv?type=csv&amp;xField=lng&amp;yField=lat&amp;spatialIndex=yes&amp;subsetIndex=no&amp;watchFile=no</span>
        </div>
      </div>
      <div className="mt-6 flex h-[42px] items-start">
        <span className="w-[272px] leading-[34px]">Data source encoding</span>
        <div className="flex h-[42px] w-[198px] overflow-hidden rounded-lg border-2 border-b-[#a8a8a8] border-[#c6c6c6] bg-white">
          <Stepper className="ml-auto h-full w-[33px]" />
        </div>
      </div>
    </Box>

    <Header className="mt-[17px] h-[42px]">Coordinate reference system</Header>
    <Box className="h-[204px] pt-7">
      <div className="flex h-[52px] items-center">
        <div className="ml-1 mt-1 flex h-[42px] grow overflow-hidden rounded-lg border-2 border-b-[#a8a8a8] border-[#c2c2c2] bg-white pl-4">
          <span className="grow leading-[30px]">Selected CRS (EPSG:4326, WGS 84)</span>
          <Stepper className="h-full w-8" />
        </div>
        <SquareButton>
          <svg viewBox="0 0 34 32" className="h-8 w-[34px]" fill="none">
            <circle cx="16" cy="15" r="14" fill="#a9cdf0" />
            <path d="M2 15A14 14 0 0 1 30 15z" fill="#a4aab2" />
            <path d="M3 8H29M2 15H30M4 22H28M16 1V29M9 3Q4 15 9 27M23 3Q28 15 23 27" stroke="#7d858f" strokeWidth="1.200" />
            <rect x="18" y="17" width="14" height="14" rx="2" fill="#c4a000" />
            <path d="M21 28L29 20" stroke="#fff" strokeWidth="3" />
          </svg>
        </SquareButton>
      </div>
      <div className="ml-3 mt-7 flex gap-[13px]">
        <PushButton className="w-[289px]">Create spatial index</PushButton>
        <PushButton className="w-[235px]">Update extents</PushButton>
      </div>
    </Box>

    <div className="-ml-3.5 mt-[34px] flex h-[38px] items-center">
      <svg viewBox="0 0 14 18" className="mt-1 h-[18px] w-3.5"><rect width="14" height="18" fill="#f8f8f8" /><circle cx="6.500" cy="9" r="6" fill="#cfcfcf" stroke="#b5b5b5" /></svg>
      <Header check className="h-[38px]">Scale dependent visibility</Header>
    </div>
    <Box className="h-[158px] pt-[15px] text-[#444]">
      <div className="flex leading-[39px]"><span className="w-[928px]">Minimum (exclusive)</span><span>Maximum (inclusive)</span></div>
      <div className="mt-4 flex h-[54px] items-start">
        <Icon className="mt-1.5 opacity-50"><Lens><rect x="18.500" y="16" width="21" height="6" fill="#6d97c4" stroke="#3b6ea5" strokeWidth="1" /></Lens></Icon>
        <ScaleCombo value="1:100,000,000" className="ml-[22px] mt-0.5 w-[781px]" />
        <div className="ml-[5px]"><CanvasScale /></div>
        <Icon className="ml-[19px] mt-1.5 opacity-50"><Lens><path d="M29 8V30M18 19H40" stroke="#3b6ea5" strokeWidth="5" /></Lens></Icon>
        <ScaleCombo value="0" className="ml-[22px] mt-0.5 w-[779px]" />
        <div className="ml-1"><CanvasScale /></div>
      </div>
    </Box>

    <Header className="mt-[15px] h-[42px]">Provider feature filter</Header>
    <Box className="h-[140px] pt-6">
      <div className="h-[100px] border-2 border-r border-[#77776d] bg-[#d4d0c8]" />
    </Box>
  </div>
);

const Dialog = () => (
  <div className="absolute left-[420px] top-[89px] flex h-[1000px] w-[2236px] flex-col overflow-hidden rounded-t-[11px] bg-[#ececec] text-[26px] text-black">
    <div className="flex h-[45px] shrink-0 items-center border-b-2 border-[#d0d0d0] bg-[#f6f6f6] pl-4 pt-px">
      <div className="flex gap-4">
        <span className="h-6 w-6 rounded-full border-2 border-[#cecece] bg-[#dcdcdc]" />
        <span className="h-6 w-6 rounded-full border-2 border-[#cecece] bg-[#dcdcdc]" />
        <span className="h-6 w-6 rounded-full border-2 border-[#cecece] bg-[#dcdcdc]" />
      </div>
      <svg viewBox="0 0 28 32" className="ml-[760px] h-8 w-7" fill="none">
        <path d="M14 5Q4 6 4 17Q4 26 12 27Q20 26 20 17Q21 9 14 5zM14 20L22 30L26 27" stroke="#e2e07a" strokeWidth="5" />
        <path d="M9 9Q4 18 9 25" stroke="#a5ab4a" strokeWidth="1.500" />
        <path d="M26 0L12 18L9 25L17 17L25 7z" fill="#58a05c" />
        <path d="M1 26H8M4.500 23V30" stroke="#777" strokeWidth="2" />
      </svg>
      <span className="ml-2.5 mt-0.5 text-[27px] leading-8 tracking-[0.1px] text-[#b0b0b0]">Layer Properties - uscities | General</span>
    </div>
    <div className="flex grow">
      <Sidebar />
      <General />
      <div className="ml-0.5 mr-2 mt-1.5 w-[26px] shrink-0 bg-[#fafafa] pl-1.5 pt-0.5">
        <div className="h-[1100px] w-4 rounded-full bg-[#c1c1c1]" />
      </div>
    </div>
  </div>
);

export default function App() {
  return (
    <div className="relative flex h-[996px] w-[2748px] flex-col overflow-hidden bg-white font-['Liberation_Sans',sans-serif]">
      <Defs />
      <TopToolbar />
      <EditToolbar />
      <div className="flex min-h-0 grow">
        <LeftToolbar />
        <div className="flex w-[328px] shrink-0 overflow-hidden"><LayersPanel /></div>
        <div className="grow border-t-2 border-[#8c8c8c] bg-white" />
      </div>
      <div className="absolute left-[420px] top-[89px] h-[1000px] w-[2236px] rounded-t-[11px] shadow-[0_0_3px_rgba(0,0,0,0.5),0_30px_50px_rgba(0,0,0,0.34)]" />
      <Dialog />
    </div>
  );
}
